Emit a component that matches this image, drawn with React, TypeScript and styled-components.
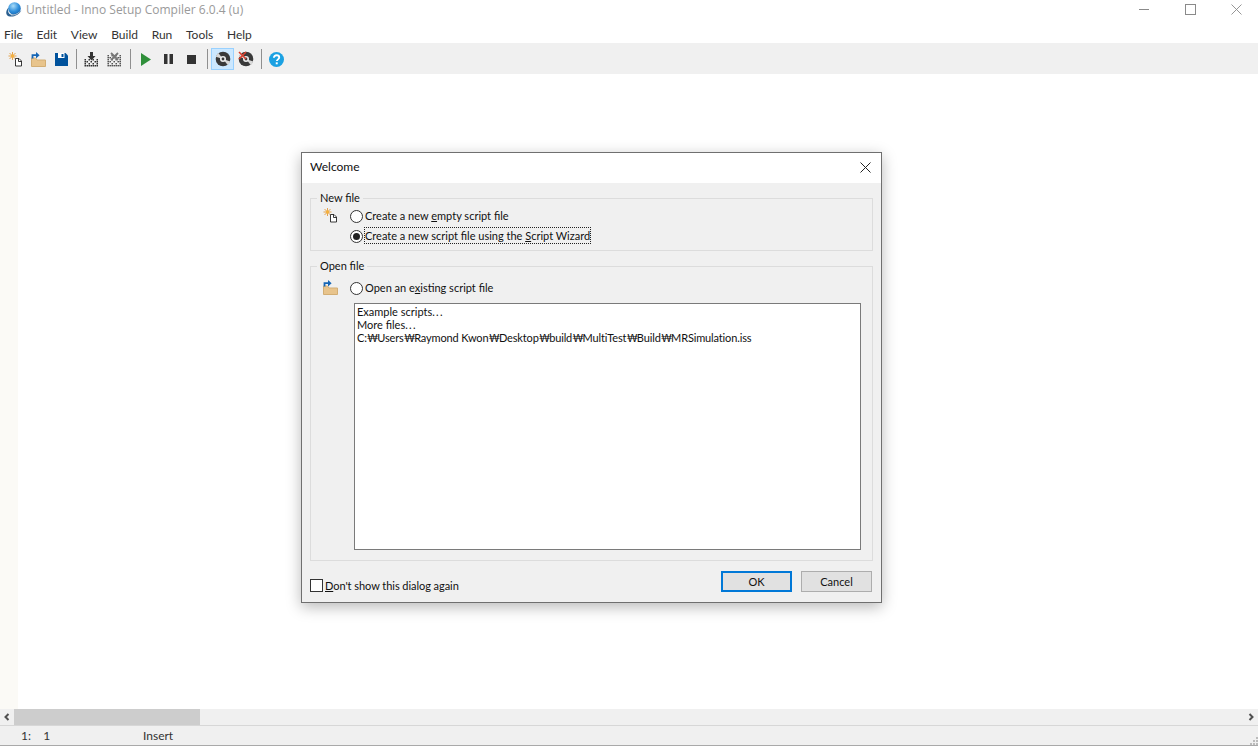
import React from "react";
import styled, { createGlobalStyle } from "styled-components";

const Global = createGlobalStyle`
  html, body { margin: 0; padding: 0; height: 100%; background: #fff; overflow: hidden; }
  #root { height: 100%; }
  * { box-sizing: border-box; }
  body { font-family: Lato, "Open Sans", "Liberation Sans", sans-serif; font-size: 11px; color: #111; }
`;

const Window = styled.div`
  position: relative;
  width: 1258px;
  height: 746px;
  display: flex;
  flex-direction: column;
  background: #fff;
`;

const TitleBar = styled.div`
  height: 24px;
  display: flex;
  align-items: flex-start;
  padding-left: 5px;
`;

const TitleIcon = styled.svg`
  width: 17px;
  height: 16px;
  margin-top: 2px;
  flex: none;
`;

const TitleText = styled.span`
  margin-left: 4px;
  font-family: "Open Sans", sans-serif;
  font-size: 12px;
  line-height: 20px;
  color: #9a9a9a;
  white-space: nowrap;
`;

const Caption = styled.div`
  margin-left: auto;
  display: flex;
  gap: 35px;
  padding-right: 16px;
`;

const CaptionButton = styled.div`
  width: 11px;
  height: 19px;
  display: flex;
  align-items: center;
  justify-content: center;
`;

const MenuBar = styled.div`
  height: 19px;
  display: flex;
  align-items: center;
  padding-left: 4px;
  gap: 13.7px;
  font-size: 12px;
  color: #333;
`;

const MenuItem = styled.span`
  line-height: 19px;
  margin-top: 1px;
`;

const Toolbar = styled.div`
  height: 31px;
  background: #f0f0f0;
  display: flex;
  align-items: center;
  padding: 1px 0 0 4px;
`;

const ToolButton = styled.div<{ $active?: boolean }>`
  width: 23px;
  height: 22px;
  display: flex;
  align-items: center;
  justify-content: center;
  border: 1px solid ${(p) => (p.$active ? "#99d1ff" : "transparent")};
  background: ${(p) => (p.$active ? "#cce8ff" : "transparent")};
`;

const Separator = styled.div<{ $w?: number }>`
  width: ${(p) => p.$w ?? 7}px;
  height: 20px;
  display: flex;
  justify-content: center;
  &::before {
    content: "";
    width: 1px;
    height: 100%;
    background: #8f8f8f;
  }
`;

const Editor = styled.div`
  flex: 1;
  display: flex;
  background: #fff;
`;

const Gutter = styled.div`
  width: 18px;
  background: #fbfaf6;
`;

const ScrollBar = styled.div`
  height: 16px;
  display: flex;
  background: #f0f0f0;
`;

const ScrollArrow = styled.div`
  width: 14px;
  display: flex;
  align-items: center;
  justify-content: center;
`;

const ScrollTrack = styled.div`
  flex: 1;
  display: flex;
`;

const ScrollThumb = styled.div`
  width: 186px;
  background: #cdcdcd;
`;

const StatusBar = styled.div`
  height: 21px;
  display: flex;
  align-items: center;
  padding-bottom: 1px;
  background: #f0f0f0;
  border-top: 1px solid #d7d7d7;
  border-bottom: 1px solid #a9a9a9;
  position: relative;
  color: #333;
  font-size: 12px;
`;

const StatusCell = styled.span<{ $w: number; $pad: number }>`
  width: ${(p) => p.$w}px;
  padding-left: ${(p) => p.$pad}px;
  line-height: 17px;
  white-space: pre;
`;

const Grip = styled.svg`
  position: absolute;
  right: 0;
  bottom: 0;
`;

const Dialog = styled.div`
  position: absolute;
  left: 301px;
  top: 152px;
  width: 581px;
  height: 451px;
  display: flex;
  flex-direction: column;
  border: 1px solid #6f6f6f;
  background: #f0f0f0;
  box-shadow: 0 4px 14px rgba(0, 0, 0, 0.28);
`;

const DialogHead = styled.div`
  height: 30px;
  flex: none;
  background: #fff;
  display: flex;
  align-items: center;
  justify-content: space-between;
  padding: 0 10px 2px 8px;
  font-size: 12px;
  color: #111;
`;

const HeadTitle = styled.span`
  line-height: 16px;
  margin-bottom: 1px;
`;

const DialogBody = styled.div`
  flex: 1;
  display: flex;
  flex-direction: column;
  padding: 8px 8px 0 8px;
  min-height: 0;
`;

const Group = styled.fieldset<{ $h: number; $top: number }>`
  margin: 0;
  height: ${(p) => p.$h}px;
  flex: none;
  border: 1px solid #dcdcdc;
  padding: ${(p) => p.$top}px 11px 0 12px;
  min-width: 0;
  & + & {
    margin-top: 8px;
  }
`;

const Legend = styled.legend`
  margin-left: -6px;
  padding: 0 3px;
  font-size: 11px;
  line-height: 14px;
  color: #111;
`;

const OptionRow = styled.div`
  display: flex;
  align-items: center;
  height: 20px;
`;

const OptionIcon = styled.div`
  width: 27px;
  height: 20px;
  padding-top: 2px;
  flex: none;
  display: flex;
  align-items: flex-start;
`;

const Radio = styled.span<{ $on?: boolean }>`
  width: 13px;
  height: 13px;
  border-radius: 50%;
  border: 1px solid #333;
  background: #fff;
  flex: none;
  display: flex;
  align-items: center;
  justify-content: center;
  margin-right: 2px;
  &::after {
    content: "";
    width: 7px;
    height: 7px;
    border-radius: 50%;
    background: ${(p) => (p.$on ? "#222" : "transparent")};
  }
`;

const OptionLabel = styled.span<{ $focus?: boolean }>`
  line-height: 15px;
  margin-bottom: 2px;
  white-space: nowrap;
  outline: ${(p) => (p.$focus ? "1px dotted #222" : "none")};
  color: #111;
`;

const FileList = styled.div`
  height: 247px;
  margin: 5px 0 0 31px;
  border: 1px solid #7a7a7a;
  background: #fff;
  padding: 1px 2px;
  line-height: 13px;
  font-size: 11px;
  color: #111;
`;

const FileItem = styled.div`
  height: 13px;
  white-space: nowrap;
`;

const PathItem = styled(FileItem)`
  letter-spacing: -0.14px;
`;

const Ellipsis = styled.span`
  letter-spacing: 1.3px;
`;

const Won = styled.span`
  letter-spacing: -1.2px;
`;

const DialogFooter = styled.div`
  flex: 1;
  display: flex;
  align-items: center;
`;

const CheckBox = styled.span`
  width: 13px;
  height: 13px;
  border: 1px solid #333;
  background: #fff;
  flex: none;
  margin: 8px 2px 0 0;
`;

const CheckLabel = styled.span`
  line-height: 15px;
  margin-top: 8px;
  letter-spacing: -0.05px;
  color: #111;
`;

const Buttons = styled.div`
  margin-left: auto;
  display: flex;
  gap: 9px;
  padding-right: 1px;
`;

const PushButton = styled.div<{ $primary?: boolean }>`
  width: 71px;
  height: 21px;
  display: flex;
  align-items: center;
  justify-content: center;
  background: #e1e1e1;
  border: ${(p) => (p.$primary ? "2px solid #0078d7" : "1px solid #adadad")};
  color: #111;
`;

const U = styled.span`
  text-decoration: underline;
  text-underline-offset: 1px;
`;

const NewIcon = () => (
  <svg width="15" height="15" viewBox="0 0 15 15">
    <path d="M4.500 0v8M.5 4h8M1.500 1l6 6M7.500 1l-6 6" stroke="#e29a3c" strokeWidth="0.900" />
    <circle cx="4.500" cy="4" r="1.700" fill="#f4b13f" />
    <path d="M7.500 6.500h3.500l2.500 2.500v5H7.500z" fill="#fff" stroke="#222" strokeWidth="0.900" />
    <path d="M10.500 6.500v3h3" fill="none" stroke="#222" strokeWidth="0.900" />
  </svg>
);

const OpenIcon = () => (
  <svg width="15" height="15" viewBox="0 0 15 15">
    <path d="M.5 6h4l1.500 2h8.500v6.500H.5z" fill="#e8c48c" stroke="#d3ae74" strokeWidth="1" />
    <path d="M1.500 6.500V3.200h4" fill="none" stroke="#1565b5" strokeWidth="1.800" />
    <path d="M5 0l3.600 3.200L5 6.400z" fill="#1565b5" />
  </svg>
);

const SaveIcon = () => (
  <svg width="13" height="13" viewBox="0 0 13 13">
    <path d="M0 0h10.500L13 2.500V13H0z" fill="#00529c" />
    <path d="M3 0h6.500v5H3z" fill="#fff" />
    <path d="M6.500 1H8.500v3H6.500z" fill="#00529c" />
  </svg>
);

const CompileIcon = () => (
  <svg width="15" height="15" viewBox="0 0 15 15">
    <g fill="#333">
      {[0, 1, 2, 3, 4, 5, 6].map((i) =>
        [0, 1, 2, 3].map((j) =>
          (i + j) % 2 === 0 || j === 3 || i === 0 || i === 6 ? (
            <rect key={`${i}-${j}`} x={i * 2 + 0.5} y={7 + j * 2} width={1.5} height={1.5} />
          ) : null
        )
      )}
    </g>
    <path d="M6 0h3v4h2.500L7.500 8.500 3.500 4H6z" fill="#333" />
  </svg>
);

const CompileStopIcon = () => (
  <svg width="15" height="15" viewBox="0 0 15 15">
    <g fill="#444">
      {[0, 1, 2, 3, 4, 5, 6].map((i) =>
        [0, 1, 2, 3, 4, 5].map((j) =>
          (i + j) % 2 === 0 || j === 5 || i === 0 || i === 6 ? (
            <rect key={`${i}-${j}`} x={i * 2 + 0.5} y={3 + j * 2} width={1.4} height={1.4} />
          ) : null
        )
      )}
    </g>
    <path d="M4 1l7 7M11 1L4 8" stroke="#777" strokeWidth="1.800" />
  </svg>
);

const Disc = () => (
  <g>
    <circle cx="8" cy="8" r="7.300" fill="#3a3a3a" />
    <g transform="rotate(35 8 8)">
      <path d="M8 8L.8 5.800A7.300 7.300 0 0 0 .8 10.200zM8 8l7.300 2.200A7.300 7.300 0 0 0 15.300 5.800z" fill="#d8d8d8" />
    </g>
    <circle cx="8" cy="8" r="3" fill="#eee" />
    <circle cx="8" cy="8" r="1.400" fill="#3a3a3a" />
  </g>
);

const pathParts = "C:₩Users₩Raymond Kwon₩Desktop₩build₩MultiTest₩Build₩MRSimulation.iss".split("₩");

const App = () => (
  <Window>
    <Global />
    <TitleBar>
      <TitleIcon viewBox="0 0 17 16">
        <defs>
          <radialGradient id="ball" cx="0.4" cy="0.3" r="0.8">
            <stop offset="0" stopColor="#a9dcf8" />
            <stop offset="0.55" stopColor="#2f8fdc" />
            <stop offset="1" stopColor="#135fa8" />
          </radialGradient>
        </defs>
        <circle cx="9.500" cy="6.500" r="6.300" fill="url(#ball)" />
        <path d="M3.500 5.500C0 9.500 0.500 14 5 14.500c4.500.5 9-2 11.500-6-3 3-7 4.600-10 4.200C3.500 12.300 2.500 9.500 3.500 5.500z" fill="#2b5f8f" />
        <path d="M6 13c3 .5 6-.7 8.500-3" fill="none" stroke="#cfd8df" strokeWidth="0.800" />
      </TitleIcon>
      <TitleText>Untitled - Inno Setup Compiler 6.0.4 (u)</TitleText>
      <Caption>
        <CaptionButton>
          <svg width="11" height="11" viewBox="0 0 11 11">
            <path d="M0 5.500h10" stroke="#8a8a8a" strokeWidth="1" />
          </svg>
        </CaptionButton>
        <CaptionButton>
          <svg width="11" height="11" viewBox="0 0 11 11">
            <rect x="0.500" y="0.500" width="10" height="10" fill="none" stroke="#8a8a8a" strokeWidth="1" />
          </svg>
        </CaptionButton>
        <CaptionButton>
          <svg width="11" height="11" viewBox="0 0 11 11">
            <path d="M.5.500l10 10M10.500.500l-10 10" stroke="#8a8a8a" strokeWidth="0.900" />
          </svg>
        </CaptionButton>
      </Caption>
    </TitleBar>
    <MenuBar>
      {["File", "Edit", "View", "Build", "Run", "Tools", "Help"].map((m) => (
        <MenuItem key={m}>{m}</MenuItem>
      ))}
    </MenuBar>
    <Toolbar>
      <ToolButton><NewIcon /></ToolButton>
      <ToolButton><OpenIcon /></ToolButton>
      <ToolButton><SaveIcon /></ToolButton>
      <Separator />
      <ToolButton><CompileIcon /></ToolButton>
      <ToolButton><CompileStopIcon /></ToolButton>
      <Separator $w={8} />
      <ToolButton>
        <svg width="11" height="13" viewBox="0 0 11 13"><path d="M1 0l10 6.500L1 13z" fill="#2f8f3a" /></svg>
      </ToolButton>
      <ToolButton>
        <svg width="9" height="10" viewBox="0 0 9 10"><path d="M0 0h3.500v10H0zM5.500 0H9v10H5.500z" fill="#333" /></svg>
      </ToolButton>
      <ToolButton>
        <svg width="9" height="9" viewBox="0 0 9 9"><rect width="9" height="9" fill="#333" /></svg>
      </ToolButton>
      <Separator $w={8} />
      <ToolButton $active>
        <svg width="16" height="16" viewBox="0 0 16 16"><Disc /></svg>
      </ToolButton>
      <ToolButton>
        <svg width="16" height="16" viewBox="0 0 16 16">
          <Disc />
          <path d="M1 1l7 7M8 1L1 8" stroke="#d9402e" strokeWidth="1.600" />
        </svg>
      </ToolButton>
      <Separator $w={8} />
      <ToolButton>
        <svg width="15" height="15" viewBox="0 0 16 16">
          <circle cx="8" cy="8" r="8" fill="#1ba1e2" />
          <path d="M5.200 6.200c0-1.700 1.200-2.700 2.900-2.700s2.800 1 2.800 2.400c0 1.900-2.500 2-2.500 3.700" fill="none" stroke="#fff" strokeWidth="2" />
          <rect x="7.200" y="11" width="2.100" height="2.100" fill="#fff" />
        </svg>
      </ToolButton>
    </Toolbar>
    <Editor>
      <Gutter />
    </Editor>
    <ScrollBar>
      <ScrollArrow>
        <svg width="8" height="8" viewBox="0 0 8 8"><path d="M5.500 1L2.500 4l3 3" fill="none" stroke="#505050" strokeWidth="2" /></svg>
      </ScrollArrow>
      <ScrollTrack><ScrollThumb /></ScrollTrack>
      <ScrollArrow>
        <svg width="8" height="8" viewBox="0 0 8 8"><path d="M2.500 1l3 3-3 3" fill="none" stroke="#505050" strokeWidth="2" /></svg>
      </ScrollArrow>
    </ScrollBar>
    <StatusBar>
      <StatusCell $w={143} $pad={21}>{"1:    1"}</StatusCell>
      <StatusCell $w={100} $pad={0}>Insert</StatusCell>
      <Grip width="9" height="9" viewBox="0 0 9 9">
        <path d="M7 1h2v2H7zM4 4h2v2H4zM7 4h2v2H7zM1 7h2v2H1zM4 7h2v2H4zM7 7h2v2H7z" fill="#bcbcbc" />
      </Grip>
    </StatusBar>

    <Dialog>
      <DialogHead>
        <HeadTitle>Welcome</HeadTitle>
        <svg width="11" height="11" viewBox="0 0 11 11">
          <path d="M.5.500l10 10M10.500.500l-10 10" stroke="#222" strokeWidth="1" />
        </svg>
      </DialogHead>
      <DialogBody>
        <Group $h={60} $top={1}>
          <Legend>New file</Legend>
          <OptionRow>
            <OptionIcon><NewIcon /></OptionIcon>
            <Radio />
            <OptionLabel>Create a new <U>e</U>mpty script file</OptionLabel>
          </OptionRow>
          <OptionRow>
            <OptionIcon />
            <Radio $on />
            <OptionLabel $focus>Create a new script file using the <U>S</U>cript Wizard</OptionLabel>
          </OptionRow>
        </Group>
        <Group $h={302} $top={5}>
          <Legend>Open file</Legend>
          <OptionRow>
            <OptionIcon><OpenIcon /></OptionIcon>
            <Radio />
            <OptionLabel>Open an e<U>x</U>isting script file</OptionLabel>
          </OptionRow>
          <FileList>
            <FileItem>Example scripts<Ellipsis>...</Ellipsis></FileItem>
            <FileItem>More files<Ellipsis>...</Ellipsis></FileItem>
            <PathItem>
              {pathParts.map((part, i) => (
                <React.Fragment key={part}>
                  {i > 0 && <Won>₩</Won>}
                  {part}
                </React.Fragment>
              ))}
            </PathItem>
          </FileList>
        </Group>
        <DialogFooter>
          <CheckBox />
          <CheckLabel><U>D</U>on't show this dialog again</CheckLabel>
          <Buttons>
            <PushButton $primary>OK</PushButton>
            <PushButton>Cancel</PushButton>
          </Buttons>
        </DialogFooter>
      </DialogBody>
    </Dialog>
  </Window>
);

export default App;
